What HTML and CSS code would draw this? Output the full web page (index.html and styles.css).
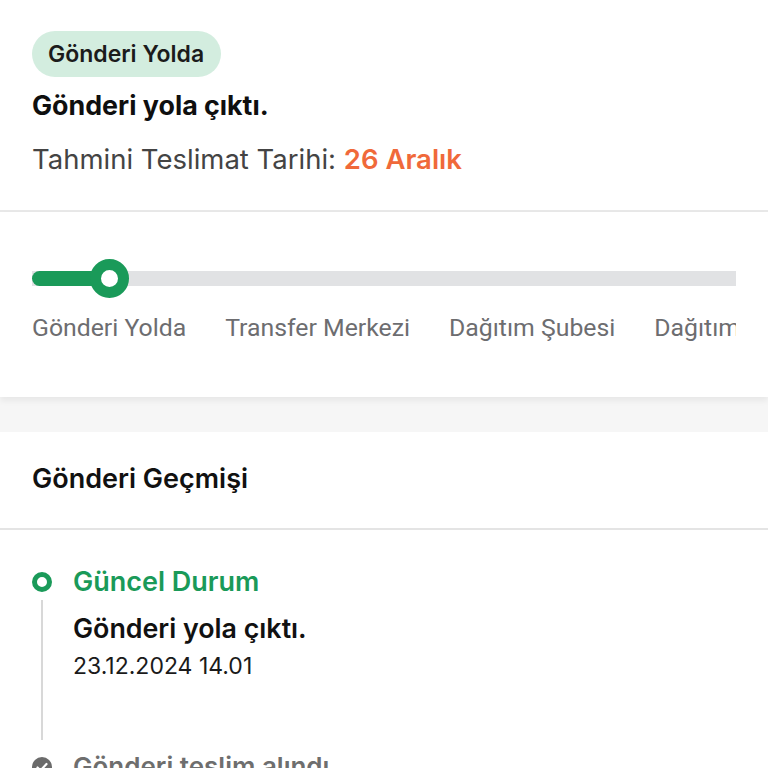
FILE: index.html
```html
<!DOCTYPE html>
<html lang="tr">
<head>
<meta charset="utf-8">
<link rel="stylesheet" href="styles.css">
</head>
<body>
<section class="summary">
  <span class="badge">Gönderi Yolda</span>
  <h1 class="title">Gönderi yola çıktı.</h1>
  <p class="eta">Tahmini Teslimat Tarihi: <span class="eta-date">26 Aralık</span></p>
</section>
<section class="progress">
  <div class="track">
    <div class="fill"></div>
    <div class="knob"></div>
  </div>
  <div class="steps">
    <span>Gönderi Yolda</span>
    <span>Transfer Merkezi</span>
    <span>Dağıtım Şubesi</span>
    <span>Dağıtımda</span>
  </div>
</section>
<div class="band"></div>
<section class="history">
  <h2 class="history-title">Gönderi Geçmişi</h2>
  <div class="timeline">
    <div class="event current">
      <div class="marker">
        <span class="ring"></span>
        <span class="line"></span>
      </div>
      <div class="event-body">
        <div class="event-status">Güncel Durum</div>
        <div class="event-text">Gönderi yola çıktı.</div>
        <div class="event-date">23.12.2024 14.01</div>
      </div>
    </div>
    <div class="event past">
      <div class="marker">
        <span class="done">
          <svg viewBox="0 0 20 20" width="20" height="20"><circle cx="10" cy="10" r="10" fill="#6b6b6b"/><path d="M5.5 10.5l3 3 6-6.5" fill="none" stroke="#fff" stroke-width="2.2" stroke-linecap="round" stroke-linejoin="round"/></svg>
        </span>
      </div>
      <div class="event-body">
        <div class="event-status muted">Gönderi teslim alındı</div>
      </div>
    </div>
  </div>
</section>
</body>
</html>
```
FILE: styles.css
```css
* { box-sizing: border-box; }
html, body { margin: 0; padding: 0; background: #fff; }
body {
  font-family: Inter, "Noto Sans", sans-serif;
  color: #111;
  width: 768px;
  height: 768px;
  overflow: hidden;
}
.summary {
  padding: 31px 32px 0;
  height: 212px;
  border-bottom: 2px solid #e8e8e8;
}
.badge {
  display: inline-flex;
  align-items: center;
  height: 46px;
  padding: 0 17px 0 16px;
  border-radius: 23px;
  background: #d3eddf;
  font-size: 23px;
  font-weight: 600;
  color: #1b1b1b;
}
.title {
  margin: 12px 0 0;
  font-size: 26.8px;
  font-weight: 700;
  line-height: 32px;
  color: #0f0f0f;
}
.eta {
  margin: 22px 0 0;
  font-size: 27.5px;
  line-height: 32px;
  color: #444;
}
.eta-date { color: #f0693a; font-weight: 600; }

.progress {
  padding: 46px 0 0 32px;
  height: 185px;
  overflow: hidden;
  box-shadow: 0 4px 6px rgba(0,0,0,0.06);
  position: relative;
  z-index: 1;
  background: #fff;
}
.track {
  position: relative;
  width: 704px;
  height: 15px;
  margin-top: 13px;
  background: #e1e2e4;
}
.fill {
  position: absolute;
  left: 0; top: 0;
  width: 80px;
  height: 15px;
  border-radius: 8px;
  background: #1a9a59;
}
.knob {
  position: absolute;
  left: 58px;
  top: -12px;
  width: 39px;
  height: 39px;
  border-radius: 50%;
  background: #fff;
  border: 11px solid #1a9a59;
}
.steps {
  display: flex;
  gap: 39px;
  width: 704px;
  overflow: hidden;
  white-space: nowrap;
  margin-top: 28px;
  font-family: Roboto, sans-serif;
  font-size: 24.8px;
  line-height: 28px;
  color: #6d6d70;
}
.band {
  height: 35px;
  background: #f6f6f6;
}
.history-title {
  margin: 0;
  padding: 30px 32px 0;
  height: 98px;
  border-bottom: 2px solid #e4e4e4;
  font-size: 27px;
  font-weight: 600;
  line-height: 34px;
  color: #111;
}
.timeline { padding: 35px 32px 0; }
.event { display: flex; gap: 21px; }
.marker {
  width: 20px;
  display: flex;
  flex-direction: column;
  align-items: center;
}
.ring {
  width: 20px;
  height: 20px;
  margin-top: 7px;
  border-radius: 50%;
  border: 5px solid #1a9a59;
  flex: none;
}
.line {
  width: 2px;
  height: 140px;
  background: #d8d8d8;
  margin-top: 8px;
}
.done { margin-top: 17px; display: block; height: 20px; }
.event-status {
  font-size: 27px;
  font-weight: 600;
  line-height: 34px;
  color: #1a9a59;
}
.event-status.muted { color: #6e6e6e; font-size: 26px; margin-top: 10px; }
.event-text {
  margin-top: 13px;
  font-size: 26.8px;
  font-weight: 600;
  line-height: 32px;
  color: #111;
}
.event-date {
  margin-top: 8px;
  font-size: 23px;
  line-height: 28px;
  color: #1a1a1a;
}
```
